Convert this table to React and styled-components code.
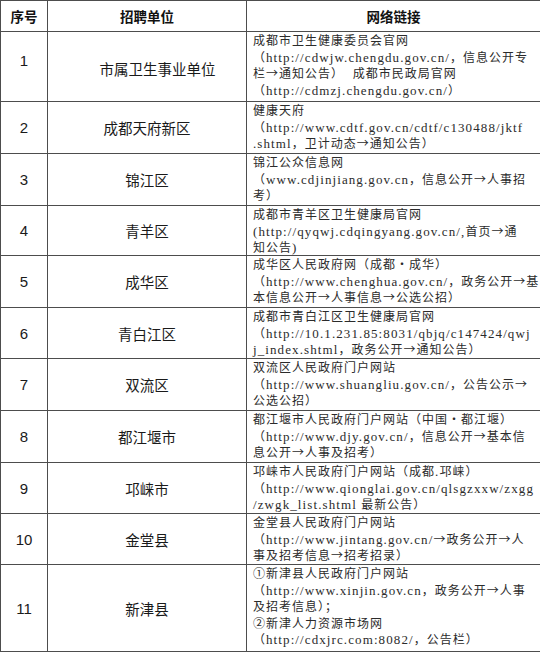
import React from 'react';
import styled, { createGlobalStyle } from 'styled-components';

const GlobalStyle = createGlobalStyle`
  html, body { margin: 0; padding: 0; background: #ffffff; }
  body { width: 540px; height: 652px; overflow: hidden; }
`;

const Sheet = styled.table`
  border-collapse: collapse;
  table-layout: fixed;
  width: 540px;
  color: #222;
`;

const Col = styled.col`
  width: ${(p) => p.$w}px;
`;

const Row = styled.tr`
  height: ${(p) => p.$h}px;
`;

const HeadCell = styled.th`
  border: 1px solid #4d4d4d;
  padding: 0;
  font-family: "Noto Sans CJK SC", sans-serif;
  font-weight: 700;
  font-size: 13.5px;
  text-align: center;
  vertical-align: middle;
  color: #111;
`;

const Cell = styled.td`
  border: 1px solid #4d4d4d;
  padding: 0;
`;

const NumCell = styled(Cell)`
  text-align: center;
  vertical-align: middle;
  font-family: "Liberation Sans", "Noto Sans CJK SC", sans-serif;
  font-size: 15px;
  color: #1a1a1a;
  padding-bottom: ${(p) => p.$lift || 0}px;
`;

const UnitCell = styled(Cell)`
  text-align: center;
  vertical-align: middle;
  font-family: "Noto Sans CJK SC", sans-serif;
  font-size: 14.5px;
  color: #1a1a1a;
  padding-left: ${(p) => p.$indent || 0}px;
  padding-top: ${(p) => p.$drop || 0}px;
`;

const LinkCell = styled(Cell)`
  vertical-align: top;
  padding-left: 6px;
  color: #2b2b2b;
`;

const LinkBox = styled.div`
  height: ${(p) => p.$h}px;
  overflow: visible;
`;

const Line = styled.div`
  white-space: pre;
  height: 16.6px;
  line-height: 16.6px;
`;

const Latin = styled.span`
  font-family: "Liberation Serif", serif;
  font-size: 13px;
  letter-spacing: 1.1px;
`;

const Han = styled.span`
  font-family: "Noto Sans CJK SC", sans-serif;
  font-size: 12px;
  letter-spacing: 1px;
`;

const rows = [
  {
    n: '1', unit: '市属卫生事业单位', h: 70, indent: 21, lift: 12, drop: 4,
    lines: [
      '成都市卫生健康委员会官网',
      '（http://cdwjw.chengdu.gov.cn/，信息公开专',
      '栏→通知公告）  成都市民政局官网',
      '（http://cdmzj.chengdu.gov.cn/）',
    ],
  },
  {
    n: '2', unit: '成都天府新区', h: 52,
    lines: [
      '健康天府',
      '（http://www.cdtf.gov.cn/cdtf/c130488/jktf',
      '.shtml，卫计动态→通知公告）',
    ],
  },
  {
    n: '3', unit: '锦江区', h: 52,
    lines: [
      '锦江公众信息网',
      '（www.cdjinjiang.gov.cn，信息公开→人事招',
      '考）',
    ],
  },
  {
    n: '4', unit: '青羊区', h: 50,
    lines: [
      '成都市青羊区卫生健康局官网',
      '(http://qyqwj.cdqingyang.gov.cn/,首页→通',
      '知公告)',
    ],
  },
  {
    n: '5', unit: '成华区', h: 52,
    lines: [
      '成华区人民政府网（成都•成华）',
      '（http://www.chenghua.gov.cn/，政务公开→基',
      '本信息公开→人事信息→公选公招）',
    ],
  },
  {
    n: '6', unit: '青白江区', h: 51,
    lines: [
      '成都市青白江区卫生健康局官网',
      '（http://10.1.231.85:8031/qbjq/c147424/qwj',
      'j_index.shtml，政务公开→通知公告）',
    ],
  },
  {
    n: '7', unit: '双流区', h: 52,
    lines: [
      '双流区人民政府门户网站',
      '（http://www.shuangliu.gov.cn/，公告公示→',
      '公选公招）',
    ],
  },
  {
    n: '8', unit: '都江堰市', h: 52,
    lines: [
      '都江堰市人民政府门户网站（中国•都江堰）',
      '（http://www.djy.gov.cn/，信息公开→基本信',
      '息公开→人事及招考）',
    ],
  },
  {
    n: '9', unit: '邛崃市', h: 51,
    lines: [
      '邛崃市人民政府门户网站（成都.邛崃）',
      '（http://www.qionglai.gov.cn/qlsgzxxw/zxgg',
      '/zwgk_list.shtml 最新公告）',
    ],
  },
  {
    n: '10', unit: '金堂县', h: 51,
    lines: [
      '金堂县人民政府门户网站',
      '（http://www.jintang.gov.cn/→政务公开→人',
      '事及招考信息→招考招录）',
    ],
  },
  {
    n: '11', unit: '新津县', h: 87,
    lines: [
      '①新津县人民政府门户网站',
      '（http://www.xinjin.gov.cn，政务公开→人事',
      '及招考信息）；',
      '②新津人力资源市场网',
      '（http://cdxjrc.com:8082/，公告栏）',
    ],
  },
];

function Rich({ text }) {
  const parts = text.split(/([\x00-\x7F]+)/).filter((s) => s.length > 0);
  return parts.map((part, i) =>
    /^[\x00-\x7F]+$/.test(part) ? <Latin key={i}>{part}</Latin> : <Han key={i}>{part}</Han>
  );
}

export default function App() {
  return (
    <>
      <GlobalStyle />
      <Sheet>
        <colgroup>
          <Col $w={47} />
          <Col $w={199} />
          <Col $w={294} />
        </colgroup>
        <thead>
          <Row $h={31}>
            <HeadCell>序号</HeadCell>
            <HeadCell>招聘单位</HeadCell>
            <HeadCell>网络链接</HeadCell>
          </Row>
        </thead>
        <tbody>
          {rows.map((r) => (
            <Row key={r.n} $h={r.h}>
              <NumCell $lift={r.lift}>{r.n}</NumCell>
              <UnitCell $indent={r.indent} $drop={r.drop}>{r.unit}</UnitCell>
              <LinkCell>
                <LinkBox $h={r.h - 1}>
                  {r.lines.map((l, i) => (
                    <Line key={i}>
                      <Rich text={l} />
                    </Line>
                  ))}
                </LinkBox>
              </LinkCell>
            </Row>
          ))}
        </tbody>
      </Sheet>
    </>
  );
}
